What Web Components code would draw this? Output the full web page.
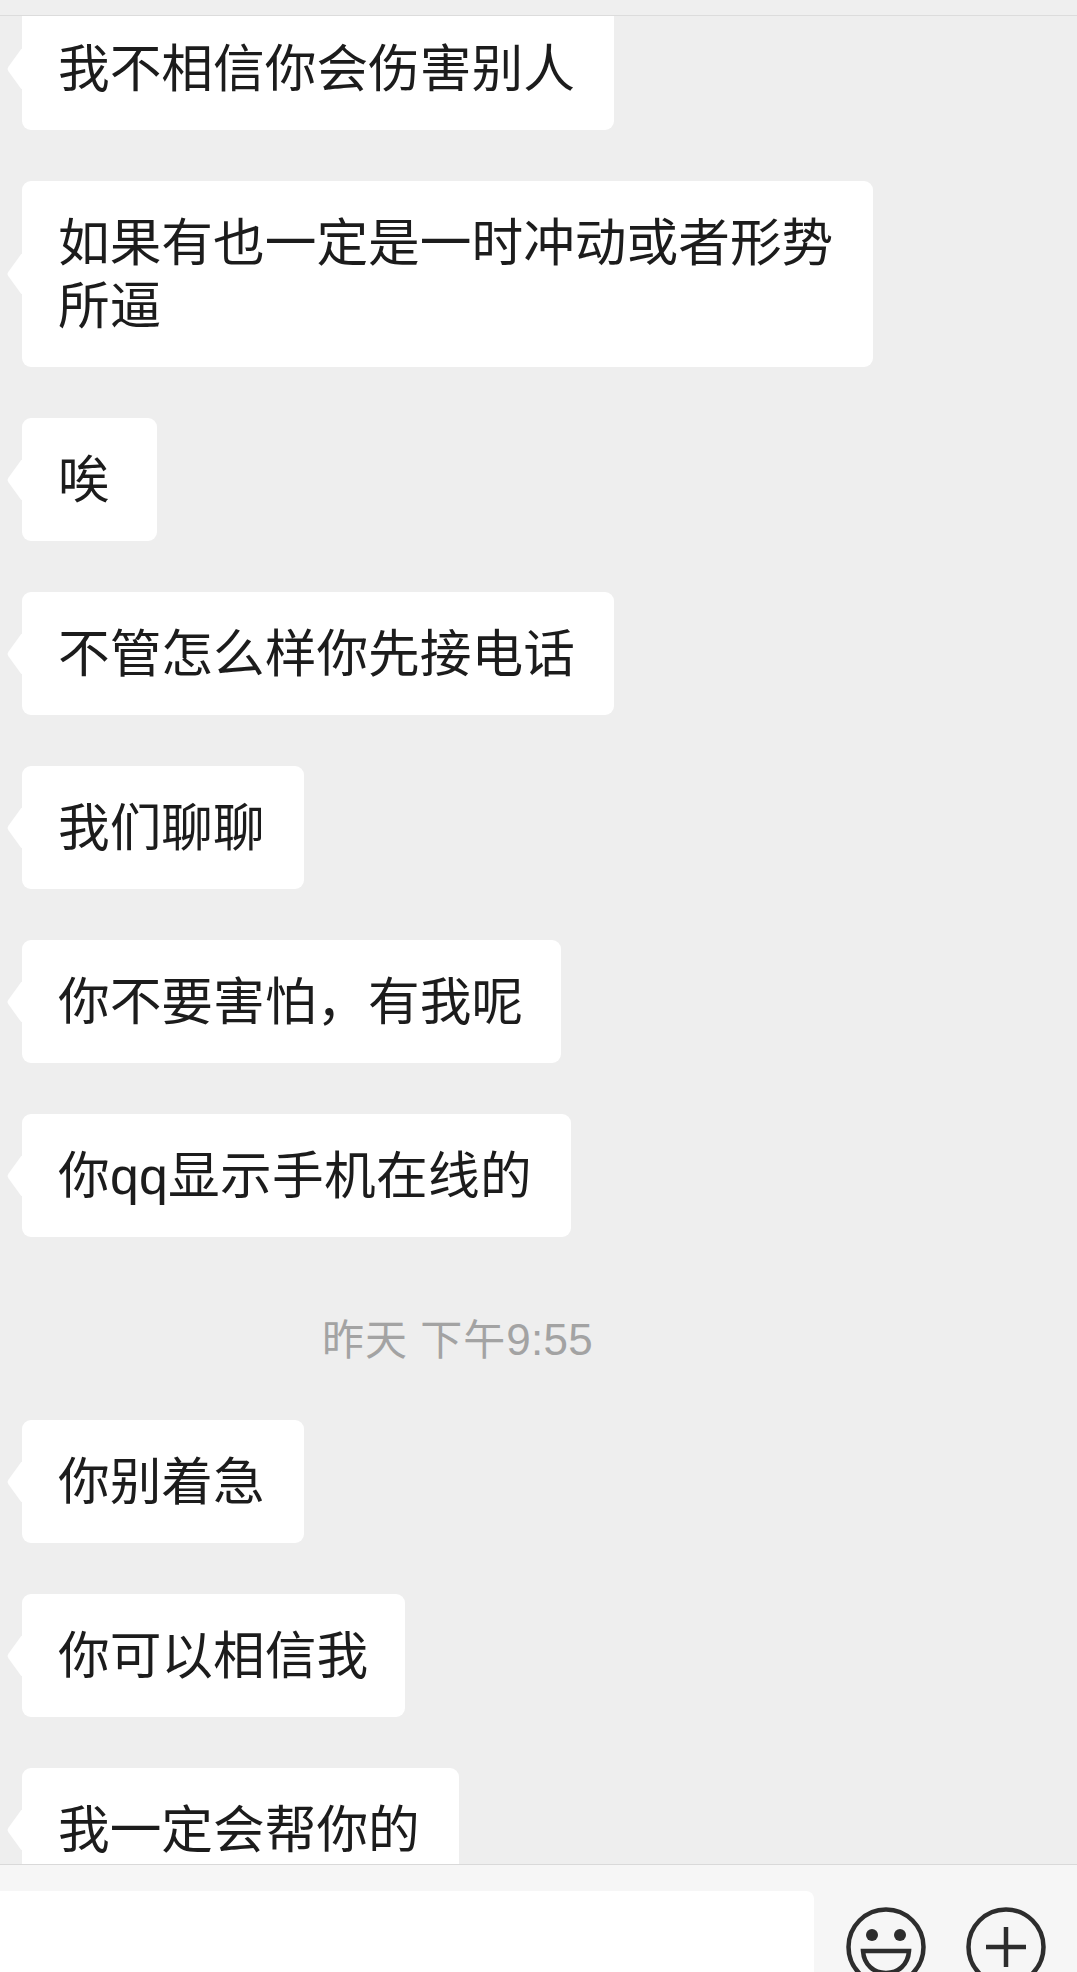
<!DOCTYPE html>
<html lang="zh-CN">
<head>
<meta charset="utf-8">
<title>聊天</title>
<style>
  html, body { margin: 0; height: 100%; }
  body { font-family: "Liberation Sans", "Noto Sans CJK SC", sans-serif; overflow: hidden; }
</style>
</head>
<body>
<chat-screen>
  <chat-bubble>我不相信你会伤害别人</chat-bubble>
  <chat-bubble>如果有也一定是一时冲动或者形势所逼</chat-bubble>
  <chat-bubble style="min-width: 135px">唉</chat-bubble>
  <chat-bubble>不管怎么样你先接电话</chat-bubble>
  <chat-bubble>我们聊聊</chat-bubble>
  <chat-bubble style="--end: 38px">你不要害怕，有我呢</chat-bubble>
  <chat-bubble style="letter-spacing: .3px">你qq显示手机在线的</chat-bubble>
  <chat-time>昨天 下午<span>9:55</span></chat-time>
  <chat-bubble>你别着急</chat-bubble>
  <chat-bubble style="--end: 37px">你可以相信我</chat-bubble>
  <chat-bubble>我一定会帮你的</chat-bubble>
</chat-screen>
<script>
/**
 * One white incoming message with its tail on the left.
 */
customElements.define('chat-bubble', class extends HTMLElement {
  constructor () {
    super()
    this.attachShadow({ mode: 'open' }).innerHTML = `
      <style>
        :host {
          display: block;
          position: relative;
          flex: none;
          align-self: flex-start;
          box-sizing: border-box;
          max-width: 851px;
          margin-left: 22px;
          padding: 31px var(--end, 39px) 29px 36px;
          background: #fff;
          border-radius: 9px;
          color: #1c1c1c;
          font-size: 51.7px;
          line-height: 63px;
        }
        :host::before {
          content: '';
          position: absolute;
          left: -15px;
          top: calc(50% - 15px);
          width: 30px;
          height: 30px;
          background: #fff;
          border-radius: 3px;
          transform: scaleX(.72) rotate(45deg);
        }
        span { position: relative; }
      </style>
      <span><slot></slot></span>
    `
  }
})

/**
 * Grey time stamp between two groups of messages.
 */
customElements.define('chat-time', class extends HTMLElement {
  constructor () {
    super()
    this.attachShadow({ mode: 'open' }).innerHTML = `
      <style>
        :host {
          display: block;
          flex: none;
          padding: 23px 162px 0 0;
          color: #a3a3a3;
          font-size: 42px;
          line-height: 57px;
          letter-spacing: .9px;
          text-align: center;
        }
        ::slotted(span) {
          font-size: 44px;
          letter-spacing: .3px;
        }
      </style>
      <slot></slot>
    `
  }
})

/**
 * Input row at the bottom, with the emoji and plus buttons.
 */
customElements.define('chat-footer', class extends HTMLElement {
  constructor () {
    super()
    this.attachShadow({ mode: 'open' }).innerHTML = `
      <style>
        :host {
          display: flex;
          flex: none;
          align-items: flex-start;
          gap: 40px;
          height: 107px;
          background: #f6f6f6;
          border-top: 1px solid #d9d9d9;
          overflow: hidden;
        }
        .input {
          flex: none;
          width: 814px;
          height: 120px;
          margin-top: 26px;
          margin-right: -8px;
          background: #fff;
          border-radius: 0 8px 0 0;
        }
        svg {
          flex: none;
          width: 80px;
          height: 80px;
          margin-top: 42px;
          fill: none;
          stroke: #2d2d2d;
          stroke-width: 4.5;
        }
      </style>
      <div class="input"></div>
      <svg viewBox="0 0 80 80">
        <circle cx="40" cy="40" r="37.5"/>
        <circle cx="26" cy="28" r="6" fill="#2d2d2d" stroke="none"/>
        <circle cx="54" cy="28" r="6" fill="#2d2d2d" stroke="none"/>
        <path d="M17 44H63C62 58 52 66 40 66S18 58 17 44Z"/>
      </svg>
      <svg viewBox="0 0 80 80">
        <circle cx="40" cy="40" r="37.5"/>
        <path d="M20 40H60M40 20V60"/>
      </svg>
    `
  }
})

/**
 * The whole phone screen: thin top bar, scrolled message list, footer.
 */
customElements.define('chat-screen', class extends HTMLElement {
  constructor () {
    super()
    this.attachShadow({ mode: 'open' }).innerHTML = `
      <style>
        :host {
          display: flex;
          flex-direction: column;
          height: 1972px;
          background: #eeeeee;
        }
        .top {
          flex: none;
          height: 15px;
          background: #efefef;
          border-bottom: 1px solid #dcdcdc;
        }
        .list {
          flex: 1;
          min-height: 0;
          overflow: hidden;
        }
        .items {
          display: flex;
          flex-direction: column;
          gap: 51px;
          margin-top: -9px;
        }
      </style>
      <div class="top"></div>
      <div class="list"><div class="items"><slot></slot></div></div>
      <chat-footer></chat-footer>
    `
  }
})
</script>
</body>
</html>
